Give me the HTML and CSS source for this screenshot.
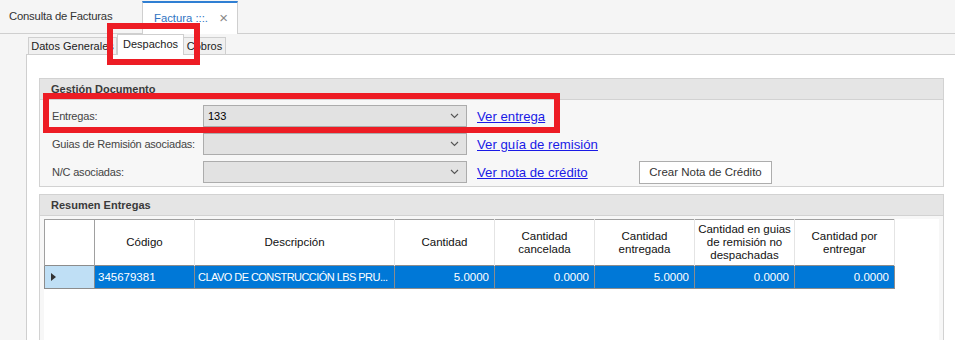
FILE: index.html
```html
<!DOCTYPE html>
<html lang="es">
<head>
    <meta charset="UTF-8">
    <meta name="viewport" content="width=device-width, initial-scale=1.0">
    <title>Factura - Despachos</title>
    <link rel="stylesheet" href="styles.css">
</head>
<body>
    <div class="doc-tabs">
        <div class="doc-tab">Consulta de Facturas</div>
        <div class="doc-tab active">Factura :::. <span class="close">&times;</span></div>
    </div>

    <div class="tab-strip">
        <div class="tab tab-datos">Datos Generales</div>
        <div class="tab selected">Despachos</div>
        <div class="tab tab-cobros">Cobros</div>
    </div>

    <div class="tab-page">
        <section class="group">
            <div class="group-title">Gestión Documento</div>
            <div class="group-body">
                <div class="form-row">
                    <label class="field-label">Entregas:</label>
                    <div class="combo"><span>133</span><svg width="9" height="6" viewBox="0 0 9 6"><polyline points="1,1 4.5,4.5 8,1" fill="none" stroke="#555" stroke-width="1.1"/></svg></div>
                    <a class="link" href="#">Ver entrega</a>
                </div>
                <div class="form-row">
                    <label class="field-label">Guias de Remisión asociadas:</label>
                    <div class="combo"><span></span><svg width="9" height="6" viewBox="0 0 9 6"><polyline points="1,1 4.5,4.5 8,1" fill="none" stroke="#555" stroke-width="1.1"/></svg></div>
                    <a class="link" href="#">Ver guía de remisión</a>
                </div>
                <div class="form-row">
                    <label class="field-label">N/C asociadas:</label>
                    <div class="combo"><span></span><svg width="9" height="6" viewBox="0 0 9 6"><polyline points="1,1 4.5,4.5 8,1" fill="none" stroke="#555" stroke-width="1.1"/></svg></div>
                    <a class="link link-nc" href="#">Ver nota de crédito</a>
                    <button class="btn">Crear Nota de Crédito</button>
                </div>
            </div>
        </section>

        <section class="group grid-group">
            <div class="group-title">Resumen Entregas</div>
            <div class="group-body">
                <div class="grid">
                    <table>
                        <colgroup>
                            <col class="col-head">
                            <col>
                            <col class="col-wide">
                            <col><col><col><col><col>
                        </colgroup>
                        <thead>
                            <tr>
                                <th class="row-head"></th>
                                <th>Código</th>
                                <th>Descripción</th>
                                <th>Cantidad</th>
                                <th>Cantidad<br>cancelada</th>
                                <th>Cantidad<br>entregada</th>
                                <th>Cantidad en guias<br>de remisión no<br>despachadas</th>
                                <th>Cantidad por<br>entregar</th>
                            </tr>
                        </thead>
                        <tbody>
                            <tr class="current">
                                <td class="row-head"><span class="arrow"></span></td>
                                <td>345679381</td>
                                <td class="desc">CLAVO DE CONSTRUCCIÓN LBS PRU...</td>
                                <td class="num">5.0000</td>
                                <td class="num">0.0000</td>
                                <td class="num">5.0000</td>
                                <td class="num">0.0000</td>
                                <td class="num">0.0000</td>
                            </tr>
                        </tbody>
                    </table>
                </div>
            </div>
        </section>
    </div>

    <!-- highlight marks drawn over the screen -->
    <div class="mark mark-tab"></div>
    <div class="mark mark-row"></div>
</body>
</html>
```

FILE: styles.css
```css
body {
    margin: 0;
    background: #f5f5f5;
    font-family: "Liberation Sans", Arial, sans-serif;
    font-size: 11px;
    color: #222;
    height: 340px;
    overflow: hidden;
    position: relative;
}

.doc-tabs {
    display: flex;
    height: 33px;
    border-bottom: 1px solid #cfcfcf;
}
.doc-tab {
    width: 142px;
    box-sizing: border-box;
    padding-left: 9px;
    line-height: 33px;
    font-size: 11.3px;
    letter-spacing: -0.2px;
    color: #333;
}
.doc-tab.active {
    width: 96px;
    margin-top: 1px;
    height: 33px;
    line-height: 30px;
    padding-left: 11px;
    background: #fff;
    border-top: 2px solid #2f7fd3;
    border-left: 1px solid #cfcfcf;
    border-right: 1px solid #cfcfcf;
    color: #2f73c2;
    letter-spacing: 0;
    display: flex;
}
.close {
    margin-left: auto;
    margin-right: 9px;
    color: #888;
    font-size: 15px;
}

.tab-strip {
    display: flex;
    align-items: flex-end;
    height: 20px;
    margin-left: 28px;
}
.tab {
    box-sizing: border-box;
    height: 17px;
    line-height: 16px;
    text-align: center;
    background: #f0f0f0;
    border: 1px solid #cfcfcf;
    border-bottom: none;
    color: #222;
    white-space: nowrap;
    overflow: hidden;
}
.tab-datos {
    width: 89px;
}
.tab-cobros {
    width: 42px;
    border-left: none;
}
.tab.selected {
    width: 67px;
    height: 21px;
    line-height: 19px;
    margin-bottom: -1px;
    background: #fff;
}

.tab-page {
    margin-left: 26px;
    background: #fff;
    border-top: 1px solid #cfcfcf;
    border-left: 1px solid #cfcfcf;
    padding: 23px 11px 0 12px;
    height: 300px;
}

.group {
    border: 1px solid #d2d2d2;
    background: #f7f7f7;
}
.group-title {
    height: 20px;
    line-height: 20px;
    padding-left: 11px;
    background: #e5e5e5;
    border-bottom: 1px solid #d2d2d2;
    font-weight: bold;
    color: #3a3a3a;
}
.group-body {
    padding: 2px 0 0 12px;
}

.form-row {
    display: flex;
    align-items: center;
    height: 28px;
}
.field-label {
    width: 151px;
    letter-spacing: -0.2px;
    color: #444;
}
.combo {
    box-sizing: border-box;
    width: 264px;
    height: 22px;
    display: flex;
    align-items: center;
    justify-content: space-between;
    padding: 0 7px 0 4px;
    background: #e2e2e2;
    border: 1px solid #acacac;
    color: #000;
}
.link {
    margin-left: 10px;
    font-size: 13.2px;
    color: #1a1ae6;
    text-decoration: underline;
}
.link-nc {
    width: 162px;
}
.btn {
    box-sizing: border-box;
    height: 23px;
    width: 133px;
    padding: 0;
    background: #fff;
    border: 1px solid #adadad;
    font-family: "Liberation Sans", Arial, sans-serif;
    font-size: 11.5px;
    color: #333;
}

.grid-group {
    margin-top: 7px;
}
.grid-group .group-body {
    padding: 3px 4px 0 4px;
}
.grid {
    background: #fff;
    height: 140px;
}
table {
    border-collapse: collapse;
    table-layout: fixed;
    width: 850px;
}
col {
    width: 100px;
}
col.col-head {
    width: 50px;
}
col.col-wide {
    width: 200px;
}
th, td {
    box-sizing: border-box;
    white-space: nowrap;
    overflow: hidden;
}
th {
    height: 46px;
    padding: 0 2px;
    font-weight: normal;
    font-size: 11.5px;
    line-height: 13px;
    color: #111;
    background: #fff;
    border-top: 1px solid #a0a0a0;
    border-right: 1px solid #e4e4e4;
    white-space: normal;
}
th.row-head {
    border-left: 1px solid #a0a0a0;
    border-right: 1px solid #a0a0a0;
}
td {
    height: 23px;
    padding: 0 5px 0 3px;
    background: #0078d7;
    color: #fff;
    font-size: 11.5px;
    border: 1px solid #8c8c8c;
}
td.desc {
    font-size: 11px;
    letter-spacing: -0.55px;
}
td.num {
    text-align: right;
}
td.row-head {
    background: #bfdff5;
    padding-left: 6px;
}
.arrow {
    display: block;
    width: 0;
    height: 0;
    border-top: 4.5px solid transparent;
    border-bottom: 4.5px solid transparent;
    border-left: 5px solid #333;
}

.mark {
    position: absolute;
    box-sizing: border-box;
    border: 6px solid #ed1c24;
}
.mark-tab {
    left: 107px;
    top: 23px;
    width: 93px;
    height: 42px;
}
.mark-row {
    left: 43px;
    top: 93px;
    width: 517px;
    height: 40px;
}
```
